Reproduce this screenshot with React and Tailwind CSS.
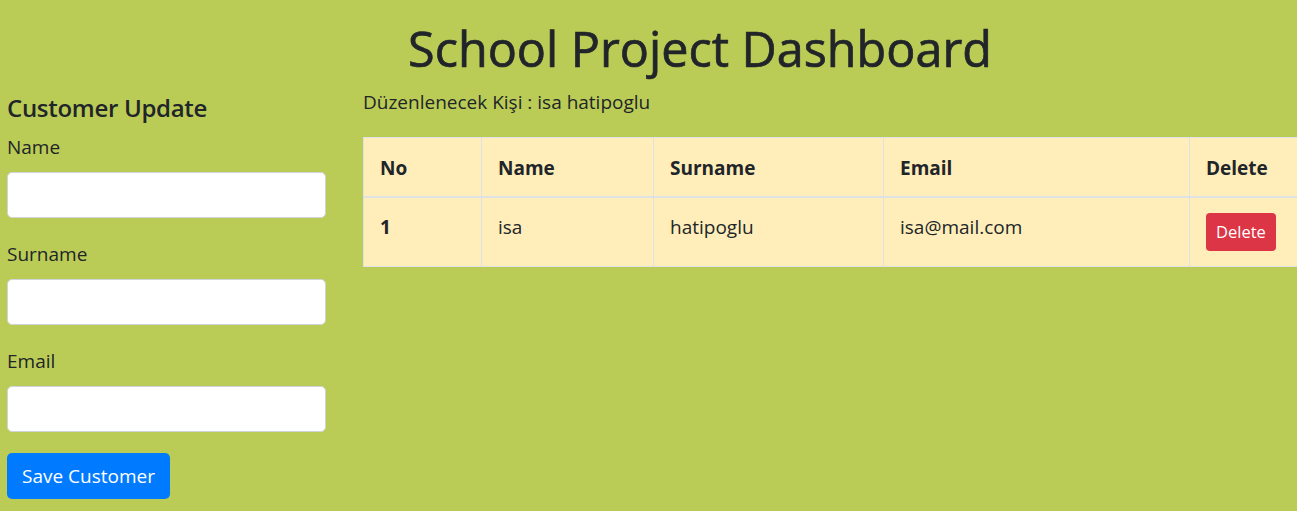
import React from 'react'

const rows = [
  { no: 1, name: 'isa', surname: 'hatipoglu', email: 'isa@mail.com' },
]

function Field({ label, last }) {
  return (
    <div className={last ? 'mb-[21px]' : 'mb-[22px]'}>
      <label className="block text-[19px] leading-[29px] mb-[10px] text-[#212529]">{label}</label>
      <input
        type="text"
        className="block w-[319px] h-[46px] bg-white border border-[#ced4da] rounded-[5px] px-3 outline-none"
      />
    </div>
  )
}

const th = 'align-top text-left px-[16px] pt-[16px] pb-[13px] leading-[29px] border border-[#dee2e6] border-b-2 font-bold'
const td = 'align-top px-[16px] py-[15px] leading-[29px] border border-[#dee2e6]'

export default function App() {
  return (
    <div className="w-[1297px] h-[511px] overflow-hidden bg-[#bbcc56] text-[#212529] font-['Open_Sans',sans-serif]">
      <div className="w-[1400px]">
        <h1 className="text-center text-[48.5px] leading-[58px] pt-[19px] pb-[11px] font-normal [-webkit-text-stroke:0.7px_#212529]">
          School Project Dashboard
        </h1>

        <div className="flex">
          {/* form */}
          <div className="w-[363px] pl-[7px] shrink-0 pt-[5px]">
            <h4 className="text-[24px] leading-[29px] font-semibold mb-[11px] tracking-[-0.3px]">Customer Update</h4>
            <Field label="Name" />
            <Field label="Surname" />
            <Field label="Email" last />
            <button className="h-[46px] px-[15px] bg-[#007bff] text-white text-[19px] rounded-[5px]">
              Save Customer
            </button>
          </div>

          {/* table */}
          <div className="flex-1">
            <p className="text-[19px] leading-[29px] mb-[20px]">Düzenlenecek Kişi : isa hatipoglu</p>
            <table className="w-[940px] border-collapse bg-[#ffeeba] text-[19px]">
              <thead>
                <tr>
                  <th className={`${th} w-[118px]`}>No</th>
                  <th className={`${th} w-[172px]`}>Name</th>
                  <th className={`${th} w-[230px]`}>Surname</th>
                  <th className={`${th} w-[306px]`}>Email</th>
                  <th className={th}>Delete</th>
                </tr>
              </thead>
              <tbody>
                {rows.map(r => (
                  <tr key={r.no}>
                    <th className={`${td} text-left font-bold`}>{r.no}</th>
                    <td className={td}>{r.name}</td>
                    <td className={td}>{r.surname}</td>
                    <td className={td}>{r.email}</td>
                    <td className="align-top px-[16px] py-[15px] border border-[#dee2e6]">
                      <button className="block h-[38px] px-[10px] bg-[#dc3545] text-white text-[16.5px] rounded-[4px]">
                        Delete
                      </button>
                    </td>
                  </tr>
                ))}
              </tbody>
            </table>
          </div>
        </div>
      </div>
    </div>
  )
}
